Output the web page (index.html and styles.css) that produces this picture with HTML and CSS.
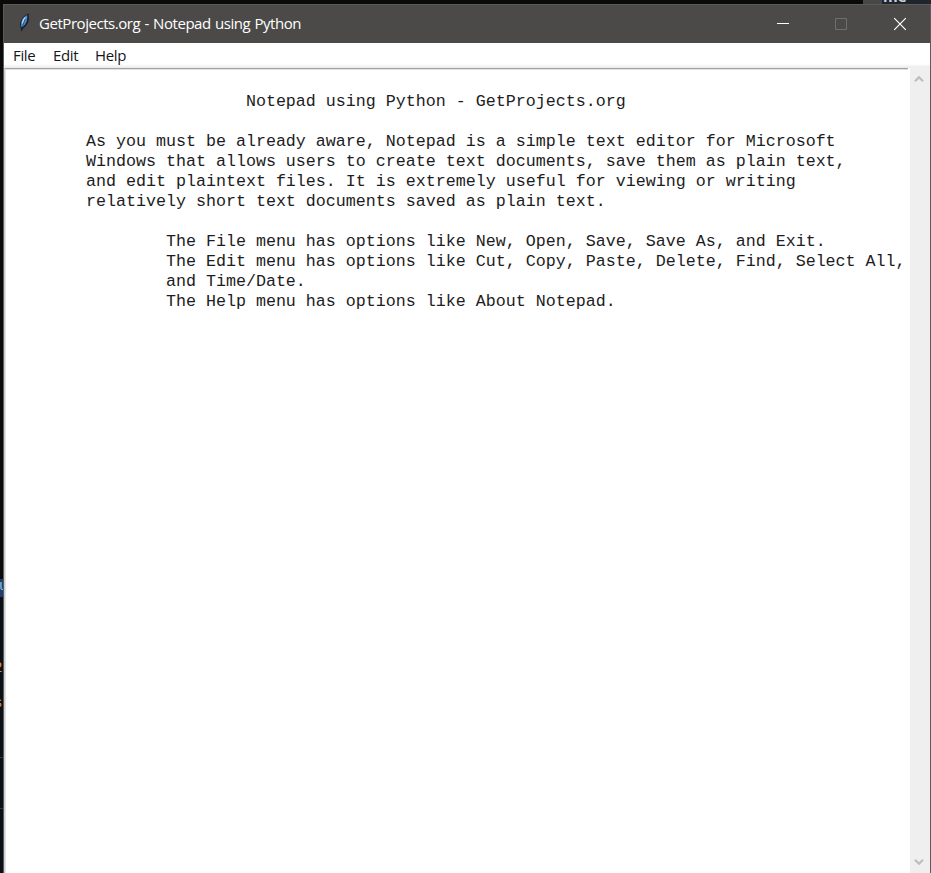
FILE: index.html
```html
<!DOCTYPE html>
<html lang="en">
<head>
<meta charset="utf-8">
<title>GetProjects.org - Notepad using Python</title>
<link rel="stylesheet" href="styles.css">
</head>
<body>
<div class="behind-top"><span class="tab"></span><span class="editor"><span class="clipped">me</span></span></div>
<div class="behind-left">
  <span class="selection">u</span>
  <span class="code first">2</span>
  <span class="code second">s</span>
  <span class="rule upper"></span>
  <span class="rule lower"></span>
</div>
<main class="window">
  <header class="titlebar">
    <svg class="feather" width="12" height="20" viewBox="0 0 12 20">
      <path d="M3.300 18.800 2.800 15.500C.7 10.200 3.300 3.700 10.400.6c1.400 4.800.4 11-5.100 14.900z" fill="#17202a"/>
      <path d="M3.300 14C2.200 9 4.600 4.300 9.200 2c.5 4.400-.7 9-4.700 12z" fill="#4a8ad0"/>
      <path d="M4 11.500C3.700 8.500 5 5.500 7.600 3.600c-.5 3-1.600 5.400-3.600 7.900z" fill="#b4d8f7"/>
      <path d="M7.200 6C5.800 9.500 4.500 13 3.800 18" fill="none" stroke="#1d3048" stroke-width=".7"/>
    </svg>
    <h1 class="title">GetProjects.org - Notepad using Python</h1>
    <svg class="controls" width="150" height="38" viewBox="0 0 150 38" fill="none">
      <path d="M16 18.500h12" stroke="#fff"/>
      <path d="M74.500 13.500h11v11h-11z" stroke="#706f6d"/>
      <path d="m133.200 13.200 11.600 11.600m0-11.600-11.600 11.600" stroke="#fff" stroke-width="1.200"/>
    </svg>
  </header>
  <nav class="menubar"><span class="file">File</span><span class="edit">Edit</span><span class="help">Help</span></nav>
  <div class="body">
    <pre class="text">

                        Notepad using Python - GetProjects.org

        As you must be already aware, Notepad is a simple text editor for Microsoft
        Windows that allows users to create text documents, save them as plain text,
        and edit plaintext files. It is extremely useful for viewing or writing
        relatively short text documents saved as plain text.

                The File menu has options like New, Open, Save, Save As, and Exit.
                The Edit menu has options like Cut, Copy, Paste, Delete, Find, Select All,
                and Time/Date.
                The Help menu has options like About Notepad.</pre>
    <div class="scrollbar">
      <svg width="10" height="8" viewBox="0 0 10 8"><path d="m1 6.200 4-4 4 4" fill="none" stroke="#bdbdbd" stroke-width="2.200"/></svg>
      <svg width="10" height="8" viewBox="0 0 10 8"><path d="m1 1.800 4 4 4-4" fill="none" stroke="#bdbdbd" stroke-width="2.200"/></svg>
    </div>
  </div>
</main>
</body>
</html>
```

FILE: styles.css
```css
* { box-sizing: border-box; }
body {
  margin: 0;
  width: 931px;
  height: 873px;
  overflow: hidden;
  background: #0a0a0b;
  display: grid;
  grid-template: 4px 869px / 3px 928px;
}
.behind-top {
  grid-column: 1 / 3;
  display: flex;
  justify-content: flex-end;
  overflow: hidden;
}
.tab { width: 19px; background: #484848; }
.editor { width: 49px; background: #20242c; overflow: hidden; }
.clipped {
  display: block;
  margin: -9px 0 0 1px;
  font: bold 15px/11px "Open Sans", sans-serif;
  color: #c8d0dc;
}
.behind-left {
  position: relative;
  overflow: hidden;
  background: linear-gradient(#0a0a0b 574px, #0b0f17 592px);
}
.behind-left span { position: absolute; left: 0; }
.selection {
  top: 575px;
  width: 3px;
  height: 18px;
  overflow: hidden;
  background: #1f3d73;
  color: #8ac6ef;
  font: 14px/14px "Liberation Mono", monospace;
  text-indent: -1px;
}
.behind-left .code {
  left: -6px;
  color: #dc9846;
  font: 14px/16px "Liberation Mono", monospace;
}
.first { top: 656px; }
.second { top: 691px; }
.rule { width: 3px; height: 1px; background: #343940; }
.upper { top: 753px; }
.lower { top: 804px; }
.window {
  display: flex;
  flex-direction: column;
  background: #fff;
  border: solid #5b5b5a;
  border-width: 1px 1px 0;
}
.titlebar {
  height: 38px;
  background: #4b4a48;
  display: flex;
  align-items: center;
  padding-left: 14px;
}
.feather { margin-top: -3px; }
.title {
  margin: -2px 0 0 9px;
  font: 15px/20px "Open Sans", sans-serif;
  letter-spacing: -.45px;
  word-spacing: .8px;
  white-space: nowrap;
  color: #fff;
}
.controls { margin-left: auto; margin-right: 19px; }
.menubar {
  height: 25px;
  display: flex;
  font: 15px/24px "Open Sans", sans-serif;
  letter-spacing: -.35px;
  color: #16161a;
  padding-left: 9px;
  background: linear-gradient(#fff 21px, #e9e9e9 25px);
}
.file { width: 40px; }
.edit { width: 42px; }
.body {
  flex: 1;
  display: flex;
}
.text {
  margin: 0;
  width: 904px;
  border-top: 1px solid #a2a2a2;
  border-left: 1px solid #cfcfcf;
  box-shadow: inset 1px 1px #e2e2e2;
  padding: 3px 0 0 1px;
  font: 16.667px/20px "Liberation Mono", monospace;
  color: #1c1c22;
}
.scrollbar {
  flex: 1;
  margin: -2px 0 0 2px;
  background: #efefef;
  display: flex;
  flex-direction: column;
  justify-content: space-between;
  align-items: center;
  padding: 9px 2px 7px 0;
}
```
